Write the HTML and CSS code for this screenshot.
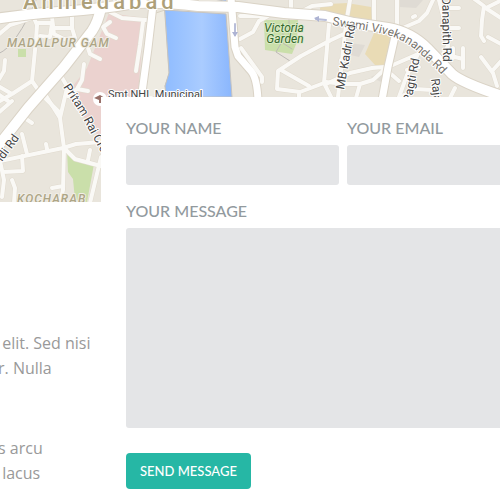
FILE: index.html
```html
<!DOCTYPE html>
<html lang="en">
<head>
<meta charset="utf-8">
<meta name="viewport" content="width=device-width, initial-scale=1">
<title>Contact</title>
<link rel="stylesheet" href="styles.css">
</head>
<body>
<header class="map">
<svg class="map-art" viewBox="0 0 500 202" preserveAspectRatio="xMinYMin slice" role="img" aria-label="Map of Ahmedabad">
  <defs>
    <linearGradient id="water" x1="0" x2="1" y1="0" y2="0">
      <stop offset="0" stop-color="#8fbcff"/><stop offset=".55" stop-color="#aaccff"/><stop offset="1" stop-color="#8ab6fd"/>
    </linearGradient>
    <g id="minor">
      <path d="M-2 35L10 25 32 18M34 18L37 25 36 40 32 81 41 94 60 113M32 81L12 94-2 102M12 94L-2 86M5 60L4 71-2 81"/>
      <path d="M37 23L52 23 50 37 40 36M52 17L54 34 64 39 73 38M54 28L72 28 75 38M72 14L72 28"/>
      <path d="M110 12L122 18 146 20M143 22L140 45 136 71M103 27L107 34 116 38M103 27L110 22M88 48L90 54 100 59M84 64L82 80 77 89 68 96M77 89L88 91M61 76L75 100"/>
      <path d="M43 91L60 118 64 148 63 190 60 203M67 88L60 118M23 117L32 123M22 134L27 154M0 161L63 148 76 144 101 142M22 156L23 171 3 172M0 161L4 180 2 197M12 180L15 188 14 203M46 144L47 149M52 188L63 186M64 148L75 159 101 166M90 150L88 160M101 157L90 203M-2 113L12 101M-2 94L8 101"/>
      <path d="M240 16L263 16M240 39L253 32 259 21 268 16M291 0V12M293 16L312 6 331 4M329 24L324 83 331 97M329 41L301 56 278 71 277 89 300 92 324 83M281 70L309 86M299 93V99"/>
      <path d="M350 0L346 24 338 97M329 41L346 33M326 84L350 73 372 68 385 67M326 82L345 84 360 84 373 80 386 68 418 54M341 60L345 60M360 84L356 98M374 0V24M397 0V28M398 30L419 21 427 13 433 0M413 17L415 16M418 54L407 75 399 97M391 74L399 81M401 97L415 89 432 90M419 67L407 70"/>
      <path d="M439 0L445 24 448 46 443 54 463 59M463 48V68M453 48V58M448 28L459 28M448 8L459 8M473 -2L484 6 482 20 481 36 484 41M484 7L501 18M484 9L502 0M481 57L493 73 497 86M493 70L503 59M455 88L450 98M501 44L488 37"/>
    </g>
    <g id="major">
      <path d="M-5 19Q25 14 58 12Q102 9 135 3Q165 2 198 6L238 7L284 13L325 16L354 23L388 28Q411 32 428 49L452 74Q462 83 505 97"/>
      <path d="M101 8Q98 22 92 31L64 67L28 108L-5 150"/>
    </g>
    <g id="medium">
      <path d="M153 5L148 48L141 100M231 -2L235 47L238 56L251 71Q257 78 258 100M396 32L388 67L382 100"/>
    </g>
    <path id="pritam" d="M63 87L80 113L104 158"/>
    <path id="swami" d="M332 25Q351 28 369 31Q402 36 419 53Q431 63 446 79"/>
  </defs>
  <rect class="land" width="500" height="202"/>
  <path class="block" d="M400 0h23l-7 8-16-1zM349 43l16 2-6 12-17-4zM371 77l15-8-3 14z"/>
  <path class="hospital" d="M109 13L144 18 138 97H101V140L88 122 66 95 87 68Z"/>
  <path class="bank" d="M153 14L165 10 169 74 165 86 169 97H142Z"/>
  <path class="water" fill="url(#water)" d="M165 10L226 14 232 97H166L165 86 169 73ZM214 -1H226V1Z"/>
  <path class="park" d="M264 20L298 20 297 42 292 54 265 50ZM18 49h8v8h-8zM67 150L76 159 94 164 87 202 75 200 73 179 68 172Z"/>
  <path class="sand" d="M320 7L329 4 347 3 371 7 372 20 320 12ZM374 33L391 36 385 66 375 65 365 54Z"/>
  <path class="path" d="M36 0Q27 22 17 36Q9 49 -2 54M283 24v16l-7 12 14 9M289 20v20h-11l14 9"/>
  <use href="#minor" class="minor-edge"/><use href="#minor" class="minor-road"/>
  <use href="#medium" class="medium-edge"/><use href="#major" class="major-edge"/>
  <path class="minor-edge" d="M241 48L262 77V82"/>
  <use href="#medium" class="medium-road"/><use href="#major" class="major-road"/>
  <path class="minor-road" d="M241 48L262 77V82"/>
  <path class="arrow" d="M235 24v11M326 20l-10-1"/>
  <path class="arrow-tip" d="M232 32h6l-3 5zM319 16v6l-5-4z"/>
  <circle cx="100" cy="99" r="7" fill="#fff"/><path d="M94 98l6-3 5 3v5h-6v-3z" fill="#987069"/>
  <g class="labels">
    <text class="city" x="23" y="9">Ahmedabad</text>
    <text class="area" x="7" y="47">MADALPUR GAM</text>
    <text class="area" x="17" y="203">KOCHARAB</text>
    <text class="garden" x="284" y="32">Victoria</text>
    <text class="garden" x="285" y="43">Garden</text>
    <text class="place" x="108" y="98">Smt NHL Municipal</text>
    <text><textPath href="#pritam">Pritam Rai Cross</textPath></text>
    <text class="road wide-road"><textPath href="#swami">Swami Vivekananda Rd</textPath></text>
    <text transform="translate(344 90) rotate(-80)">MB Kadri Rd</text>
    <text transform="translate(2 162) rotate(-54)">idi Rd</text>
    <text transform="translate(411 103) rotate(-79)">Pagti Rd</text>
    <text transform="translate(431 79) rotate(83)">Rajan</text>
    <text transform="translate(442 -3) rotate(89)">Danapith Rd</text>
  </g>
</svg>
</header>
<main class="contact">
  <aside class="about">
    <p> elit. Sed nisi
r. Nulla</p>
    <p>s arcu
 lacus</p>
  </aside>
  <form class="panel">
    <div class="fields">
      <div class="field"><label for="name">YOUR NAME</label><input id="name" type="text"></div>
      <div class="field"><label for="email">YOUR EMAIL</label><input id="email" type="email"></div>
      <div class="field wide"><label for="message">YOUR MESSAGE</label><textarea id="message"></textarea></div>
    </div>
    <button type="button">SEND MESSAGE</button>
  </form>
</main>
</body>
</html>
```
FILE: styles.css
```css
* { box-sizing: border-box; }
body { margin: 0; overflow: hidden; background: #fff; color: #999; font-family: "Open Sans", sans-serif; }
.map { height: 202px; overflow: hidden; }
.map-art { display: block; width: 100%; height: 100%; }
.map-art path, .map-art use { stroke-linejoin: round; stroke-linecap: round; }
.land { fill: #e9e5dc; }
.block { fill: #dfdbd4; }
.hospital { fill: #ebd2cf; }
.bank { fill: #eeebe2; stroke: #d8d2c4; }
.water { stroke: #c5c3c0; }
.park { fill: #cadfaa; }
.sand { fill: #e9dbb5; }
.path { fill: none; stroke: #bdbab6; }
.minor-edge { fill: none; stroke: #e0dace; stroke-width: 5px; }
.minor-road { fill: none; stroke: #faf9f6; stroke-width: 4px; }
.medium-edge { fill: none; stroke: #dad3c6; stroke-width: 9px; }
.medium-road { fill: none; stroke: #fff; stroke-width: 7px; }
.major-edge { fill: none; stroke: #dad3c6; stroke-width: 12px; }
.major-road { fill: none; stroke: #fff; stroke-width: 10px; }
.arrow { fill: none; stroke: #b9bed9; stroke-width: 2px; }
.arrow-tip { fill: #adb3d3; }
.labels { font: 12px Roboto, sans-serif; fill: #444; stroke: #fff; stroke-width: 2px; stroke-linejoin: round; paint-order: stroke; }
.labels .city { font-size: 22px; font-weight: 500; letter-spacing: 4px; fill: #ada079; }
.labels .area { font-size: 12px; font-weight: 500; font-style: italic; letter-spacing: 1px; fill: #ada585; stroke: #f1eee7; }
.labels .garden { font-size: 12px; font-style: italic; text-anchor: middle; fill: #35682c; stroke: #dcecc8; }
.labels .place { font-size: 11px; }
.labels .road { fill: #77736c; }
.contact { display: grid; grid-template-columns: 101px 1fr; }
.about { padding-top: 129px; }
.about p { margin: 0 0 55px -2px; font-size: 16px; line-height: 25px; white-space: pre; }
.about p:last-child { margin-bottom: 0; }
.panel { position: relative; margin-top: -105px; padding: 20px 0 10px 25px; background: #fff; min-width: 459px; }
.fields { display: grid; grid-template-columns: 1fr 1fr; gap: 15px 8px; }
.field { display: flex; flex-direction: column; }
.wide { grid-column: 1 / -1; }
label { height: 28px; font: 500 16px/22px Lato, sans-serif; color: #929a9e; }
input, textarea { width: 100%; border: 0; border-radius: 3px; background: #e4e5e7; padding: 10px; font: 15px "Open Sans", sans-serif; }
input { height: 40px; }
textarea { height: 200px; resize: none; }
button { display: block; margin-top: 25px; padding: 0 14px; height: 36px; border: 0; border-radius: 4px; background: #26b7a5; color: #fff; font: 500 13px Lato, sans-serif; }
```
